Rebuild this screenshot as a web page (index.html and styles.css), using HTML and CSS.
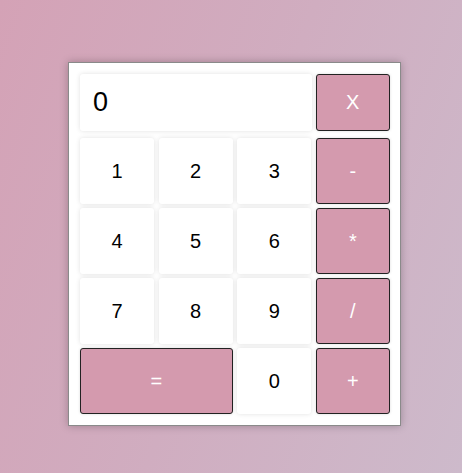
FILE: index.html
```html
<!DOCTYPE html>
<html>
<head>
<meta charset="utf-8">
<link rel="stylesheet" href="styles.css">
</head>
<body>
<div class="calc">
  <div class="display">0</div>
  <button class="btn op top">X</button>
  <button class="btn num">1</button>
  <button class="btn num">2</button>
  <button class="btn num">3</button>
  <button class="btn op">-</button>
  <button class="btn num">4</button>
  <button class="btn num">5</button>
  <button class="btn num">6</button>
  <button class="btn op">*</button>
  <button class="btn num">7</button>
  <button class="btn num">8</button>
  <button class="btn num">9</button>
  <button class="btn op">/</button>
  <button class="btn op wide">=</button>
  <button class="btn num">0</button>
  <button class="btn op">+</button>
</div>
</body>
</html>
```
FILE: styles.css
```css
html, body {
  margin: 0;
  height: 100%;
}
body {
  background: linear-gradient(110deg, #d4a2b6 0%, #d0adc0 50%, #cdbacb 100%);
  font-family: "Liberation Sans", Arial, sans-serif;
  padding-top: 62px;
  padding-left: 68px;
  box-sizing: border-box;
}
.calc {
  width: 310px;
  background: #fff;
  border: 1px solid #8a8a8a;
  box-shadow: 0 0 8px rgba(0,0,0,0.25);
  padding: 11px 10px 11px 11px;
  display: grid;
  grid-template-columns: 74px 74px 74px 74px;
  grid-template-rows: 60px 66px 66px 66px 66px;
  column-gap: 4.6px;
  row-gap: 4px;
}
.display {
  grid-column: span 3;
  height: 57px;
  background: #fff;
  box-shadow: 0 0 5px rgba(0,0,0,0.12);
  border-radius: 3px;
  font-size: 27px;
  padding-left: 13px;
  display: flex;
  align-items: center;
  color: #000;
  margin-right: -1px;
}
.top {
  height: 57px;
}
.btn {
  font-family: "Liberation Sans", Arial, sans-serif;
  font-size: 20px;
  border-radius: 3px;
  margin: 0;
  padding: 0;
  cursor: pointer;
}
.num {
  background: #fff;
  border: none;
  color: #000;
  box-shadow: 0 0 5px rgba(0,0,0,0.12);
}
.op {
  background: #d49aae;
  border: 1px solid #222;
  color: #fff;
  box-shadow: 0 0 3px rgba(0,0,0,0.15);
}
.wide {
  grid-column: span 2;
}
```
